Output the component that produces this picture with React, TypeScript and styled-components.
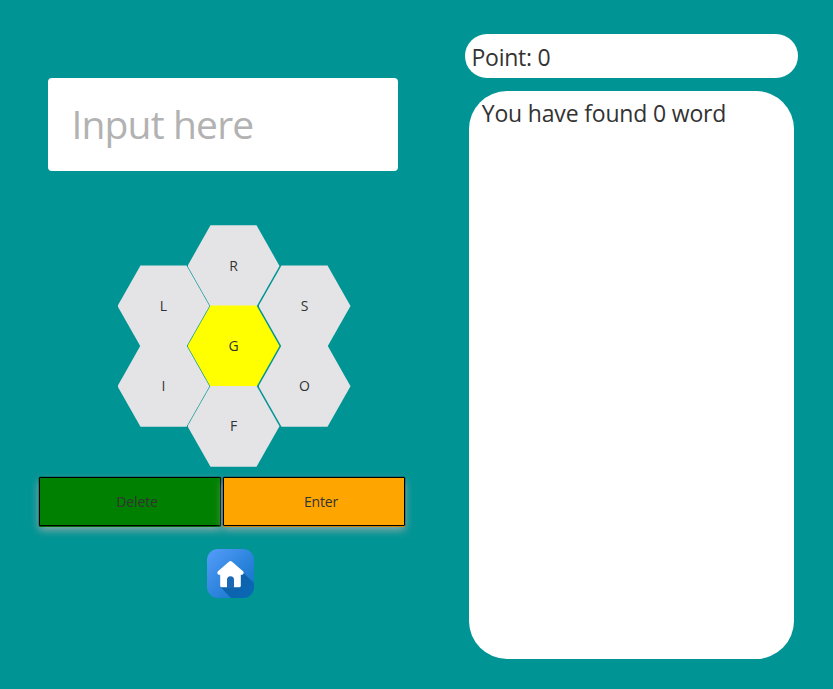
import React from "react";
import styled, { createGlobalStyle } from "styled-components";

const GlobalStyle = createGlobalStyle`
  * { box-sizing: border-box; }
  body { margin: 0; background: #009494; }
`;

const Page = styled.main`
  display: flex;
  width: 833px;
  height: 689px;
  overflow: hidden;
  background: #009494;
  color: #333;
  font-family: "Open Sans", "Noto Sans", sans-serif;
`;

const GamePanel = styled.section`
  flex: 0 0 465px;
  display: flex;
  flex-direction: column;
  align-items: flex-start;
  padding-top: 78px;
`;

const WordInput = styled.input`
  width: 350px;
  height: 92.5px;
  margin-left: 47.5px;
  padding: 0 24px 2px 24px;
  border: 0;
  border-radius: 4px;
  outline: 0;
  background: #fff;
  color: #333;
  font: 400 39px "Open Sans", sans-serif;
  letter-spacing: -0.85px;
  &::placeholder {
    color: #b2b2b2;
    opacity: 1;
  }
`;

const Honeycomb = styled.div`
  display: flex;
  align-items: center;
  margin: 54.8px 0 0 117.5px;
`;

const HexColumn = styled.div<{ $overlap: number }>`
  display: flex;
  flex-direction: column;
  margin-left: ${(p) => -p.$overlap}px;
`;

const Hexagon = styled.button<{ $center?: boolean }>`
  width: 92px;
  height: 81.2px;
  padding: 0 0 1.6px;
  border: 0;
  background: ${(p) => (p.$center ? "#ffff00" : "#e4e4e6")};
  clip-path: polygon(25% 0, 75% 0, 100% 50%, 75% 100%, 25% 100%, 0 50%);
  color: #333;
  font: 400 14px "Open Sans", sans-serif;
  & + & {
    margin-top: -1px;
  }
`;

const Actions = styled.div`
  display: flex;
  gap: 2px;
  margin: 10px 0 0 39px;
`;

const ActionButton = styled.button<{ $fill: string }>`
  width: 182px;
  height: 49px;
  padding: 1px 0 0 14px;
  border: 1px solid #000;
  border-radius: 1px;
  background: ${(p) => p.$fill};
  box-shadow: 0 0 0 0.5px rgba(0, 0, 0, 0.4), 0 1px 0 ${(p) => p.$fill},
    0 4px 9px rgba(185, 175, 175, 0.8);
  color: #333;
  font: 400 14px "Open Sans", sans-serif;
  letter-spacing: -0.15px;
`;

const HomeButton = styled.button`
  display: flex;
  margin: 23px 0 0 207px;
  padding: 0;
  border: 0;
  background: none;
`;

const ResultsPanel = styled.section`
  flex: 1;
  padding-top: 34.3px;
  font-size: 23px;
  line-height: 32px;
`;

const Score = styled.div`
  width: 332.5px;
  height: 43.5px;
  padding: 7px 6.5px 0;
  border-radius: 22px;
  background: #fff;
  letter-spacing: -0.25px;
`;

const FoundWords = styled.div`
  width: 325px;
  height: 568.5px;
  margin: 12.9px 0 0 3.7px;
  padding: 6px 13px;
  border-radius: 38px;
  background: #fff;
  letter-spacing: -0.17px;
`;

const HomeIcon = () => (
  <svg width="47" height="49" viewBox="0 0 47 49" aria-label="Home">
    <defs>
      <linearGradient id="tile" x1="0" y1="0" x2="1" y2="1">
        <stop offset="0" stopColor="#559dfb" />
        <stop offset="1" stopColor="#0b6fc2" />
      </linearGradient>
      <linearGradient id="shade" x1="0" y1="0" x2="1" y2="1">
        <stop offset="0" stopColor="#125da5" />
        <stop offset="1" stopColor="#0869b7" />
      </linearGradient>
      <clipPath id="tileShape">
        <rect width="47" height="49" rx="11" />
      </clipPath>
    </defs>
    <g clipPath="url(#tileShape)">
      <rect width="47" height="49" fill="url(#tile)" />
      <path d="M36.5 24 47 34v15H24L13.5 38Z" fill="url(#shade)" />
      <path d="M20 27h7v12h-7Z" fill="#1c68b4" />
      <path
        d="M22.2 12.4q1.3-1 2.6 0l11.5 10q1.3 2-.8 3.4h-1.7v11q0 1.5-1.5 1.5H27V31q0-3.7-3.5-3.7T20 31v7.3h-5.3q-1.5 0-1.5-1.5v-11h-1.7q-2.1-1.4-.8-3.4Z"
        fill="#fff"
      />
    </g>
  </svg>
);

export default function App() {
  return (
    <Page>
      <GlobalStyle />
      <GamePanel>
        <WordInput placeholder="Input here" />
        <Honeycomb>
          <HexColumn $overlap={0}>
            <Hexagon>L</Hexagon>
            <Hexagon>I</Hexagon>
          </HexColumn>
          <HexColumn $overlap={22}>
            <Hexagon>R</Hexagon>
            <Hexagon $center>G</Hexagon>
            <Hexagon>F</Hexagon>
          </HexColumn>
          <HexColumn $overlap={21}>
            <Hexagon>S</Hexagon>
            <Hexagon>O</Hexagon>
          </HexColumn>
        </Honeycomb>
        <Actions>
          <ActionButton $fill="#008000">Delete</ActionButton>
          <ActionButton $fill="#ffa500">Enter</ActionButton>
        </Actions>
        <HomeButton>
          <HomeIcon />
        </HomeButton>
      </GamePanel>
      <ResultsPanel>
        <Score>Point: 0</Score>
        <FoundWords>You have found 0 word</FoundWords>
      </ResultsPanel>
    </Page>
  );
}
